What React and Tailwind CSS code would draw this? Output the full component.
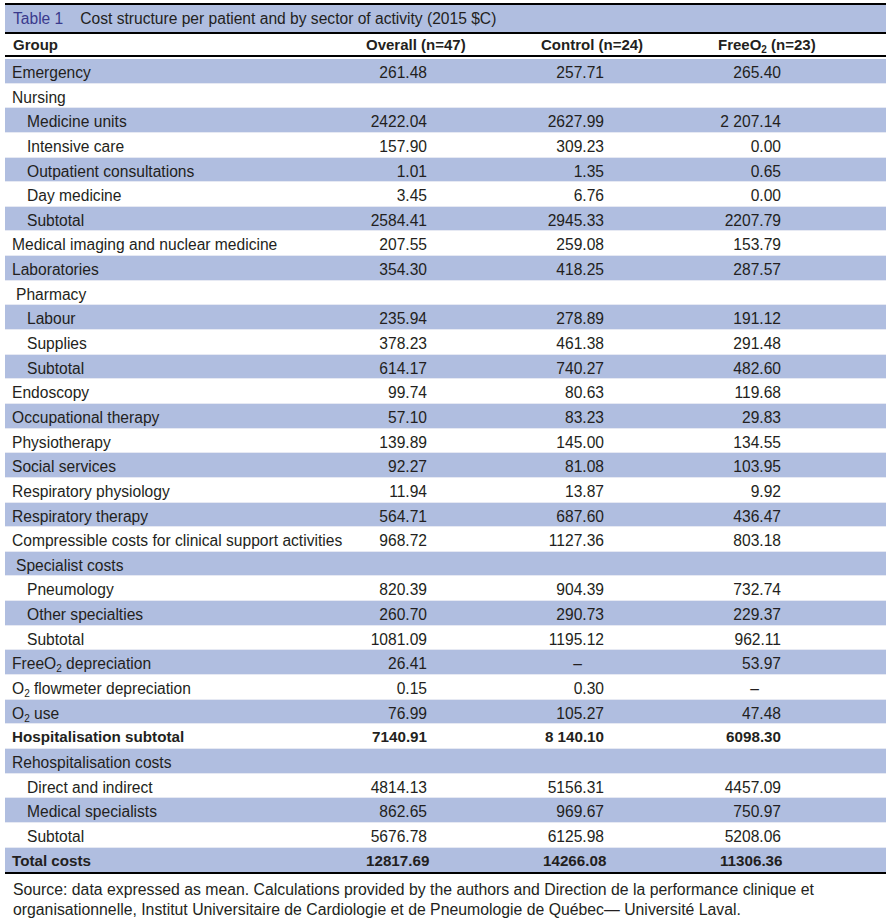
import React from "react";

const O2 = () => (
  <>
    O<sub className="text-[10px] relative top-[3px]">2</sub>
  </>
);

// indent: 0 = top level, 1 = sub item, 2 = oddly nudged group heading
const rows = [
  ["Emergency", "261.48", "257.71", "265.40", 0],
  ["Nursing", "", "", "", 0],
  ["Medicine units", "2422.04", "2627.99", "2 207.14", 1],
  ["Intensive care", "157.90", "309.23", "0.00", 1],
  ["Outpatient consultations", "1.01", "1.35", "0.65", 1],
  ["Day medicine", "3.45", "6.76", "0.00", 1],
  ["Subtotal", "2584.41", "2945.33", "2207.79", 1],
  ["Medical imaging and nuclear medicine", "207.55", "259.08", "153.79", 0],
  ["Laboratories", "354.30", "418.25", "287.57", 0],
  ["Pharmacy", "", "", "", 2],
  ["Labour", "235.94", "278.89", "191.12", 1],
  ["Supplies", "378.23", "461.38", "291.48", 1],
  ["Subtotal", "614.17", "740.27", "482.60", 1],
  ["Endoscopy", "99.74", "80.63", "119.68", 0],
  ["Occupational therapy", "57.10", "83.23", "29.83", 0],
  ["Physiotherapy", "139.89", "145.00", "134.55", 0],
  ["Social services", "92.27", "81.08", "103.95", 0],
  ["Respiratory physiology", "11.94", "13.87", "9.92", 0],
  ["Respiratory therapy", "564.71", "687.60", "436.47", 0],
  ["Compressible costs for clinical support activities", "968.72", "1127.36", "803.18", 0],
  ["Specialist costs", "", "", "", 2],
  ["Pneumology", "820.39", "904.39", "732.74", 1],
  ["Other specialties", "260.70", "290.73", "229.37", 1],
  ["Subtotal", "1081.09", "1195.12", "962.11", 1],
  [<>Free<O2 /> depreciation</>, "26.41", "–", "53.97", 0],
  [<><O2 /> flowmeter depreciation</>, "0.15", "0.30", "–", 0],
  [<><O2 /> use</>, "76.99", "105.27", "47.48", 0],
  ["Hospitalisation subtotal", "7140.91", "8 140.10", "6098.30", 0, true],
  ["Rehospitalisation costs", "", "", "", 0],
  ["Direct and indirect", "4814.13", "5156.31", "4457.09", 1],
  ["Medical specialists", "862.65", "969.67", "750.97", 1],
  ["Subtotal", "5676.78", "6125.98", "5208.06", 1],
  ["Total costs", "12817.69", "14266.08", "11306.36", 0, true],
];

const indentClass = ["pl-[7px]", "pl-[22px]", "pl-[11px]"];

function Value({ v }) {
  return (
    <div className="w-[61px] text-right">
      {v === "–" ? <span className="mr-[22px]">–</span> : v}
    </div>
  );
}

export default function App() {
  return (
    <div
      className="w-[895px] bg-white text-[#231f20] text-[15.6px] pt-[3px]"
      style={{ fontFamily: '"Liberation Sans", Arial, sans-serif' }}
    >
      <div className="ml-[5px] w-[881px]">
        {/* Caption */}
        <div className="border-t-2 border-black bg-[#b0bee0] h-[29px] flex items-center pl-[8px] pt-[1px]">
          <span className="text-[#3a3a8d] mr-[17px]">Table 1</span>
          <span>Cost structure per patient and by sector of activity (2015 $C)</span>
        </div>

        {/* Header */}
        <div className="border-t-2 border-b-2 border-black h-[25px] grid grid-cols-[361px_177px_177px_1fr] items-center font-bold text-[15px]">
          <div className="pl-[8px]">Group</div>
          <div>Overall (n=47)</div>
          <div className="-ml-[2px]">Control (n=24)</div>
          <div className="-ml-[2px]">
            Free<O2 /> (n=23)
          </div>
        </div>

        {/* Body */}
        <div className="border-b-2 border-black pt-[2px]">
          {rows.map(([label, a, b, c, indent, bold], i) => (
            <div
              key={i}
              className={`h-[24.65px] grid grid-cols-[361px_177px_177px_1fr] items-center pt-[2px] border-b border-[#e6e9f3] last:border-b-0 ${
                i % 2 === 0 ? "bg-[#b0bee0]" : "bg-white"
              } ${bold ? "font-bold text-[15.2px]" : ""}`}
            >
              <div className={`${indentClass[indent]} whitespace-nowrap`}>{label}</div>
              <Value v={a} />
              <Value v={b} />
              <Value v={c} />
            </div>
          ))}
        </div>

        {/* Footnote */}
        <div className="pl-[8px] pt-[6px] leading-[20px] text-[15.8px]">
          Source: data expressed as mean. Calculations provided by the authors and Direction de la performance clinique et
          <br />
          organisationnelle, Institut Universitaire de Cardiologie et de Pneumologie de Québec— Université Laval.
        </div>
      </div>
    </div>
  );
}
